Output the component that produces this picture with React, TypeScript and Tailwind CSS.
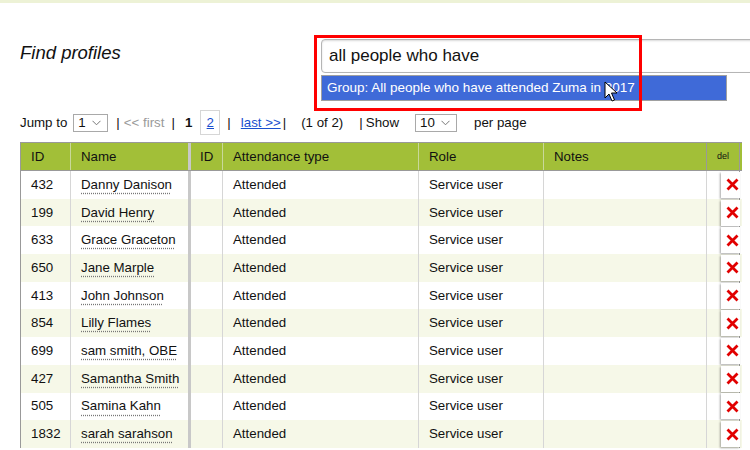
import React from "react";

const rows = [
  { id: "432", name: "Danny Danison" },
  { id: "199", name: "David Henry" },
  { id: "633", name: "Grace Graceton" },
  { id: "650", name: "Jane Marple" },
  { id: "413", name: "John Johnson" },
  { id: "854", name: "Lilly Flames" },
  { id: "699", name: "sam smith, OBE" },
  { id: "427", name: "Samantha Smith" },
  { id: "505", name: "Samina Kahn" },
  { id: "1832", name: "sarah sarahson" },
];

const cols = "grid grid-cols-[50px_120px_32px_196px_125px_163px_33px]";

const Chevron = () => (
  <svg width="9" height="6" viewBox="0 0 9 6" className="ml-auto mr-[6px]">
    <path d="M0.5 0.8 L4.5 4.8 L8.5 0.8" fill="none" stroke="#777" strokeWidth="1" />
  </svg>
);

const Select = ({ value, className }: { value: string; className: string }) => (
  <div
    className={`flex h-[18px] items-center border border-[#a9a9a9] bg-white pl-[4px] text-[13.3px] ${className}`}
  >
    <span>{value}</span>
    <Chevron />
  </div>
);

const DelButton = () => (
  <div className="relative z-10 -mr-[1px] ml-auto flex h-[26px] w-[19px] items-center justify-end bg-white pr-[1px] shadow-[-1px_1px_2px_rgba(0,0,0,0.35)]">
    <svg width="13" height="13" viewBox="0 0 13 13">
      <path d="M1.5 1.5 L11.5 11.5 M11.5 1.5 L1.5 11.5" stroke="#e10000" strokeWidth="2.8" />
    </svg>
  </div>
);

export default function App() {
  return (
    <div className="relative h-[450px] w-[750px] overflow-hidden bg-white font-['Liberation_Sans',Arial,sans-serif] text-[#111]">
      <div className="h-[3px] bg-[#edf2d6]" />

      {/* header */}
      <div className="mt-[36px] flex">
        <div className="w-[321px] shrink-0 pl-[20px] text-[18.5px] italic">Find profiles</div>
        <div className="relative">
          <div className="flex h-[34px] w-[440px] items-center rounded-[4px] border border-[#b5b5b5] pl-[7px] text-[17px] shadow-[inset_0_1px_2px_rgba(0,0,0,0.15)]">
            all people who have
          </div>
          <div className="absolute left-0 top-[36px] flex h-[26px] w-[406px] items-center border border-[#a0a0a0] bg-[#3f6ad8] pl-[5px] text-[13.5px] text-white">
            Group: All people who have attended Zuma in 2017
          </div>
          {/* mouse cursor */}
          <svg
            width="14"
            height="22"
            viewBox="0 0 14 22"
            className="absolute left-[283px] top-[42px]"
          >
            <path
              d="M1 1 L1 17 L5 13 L8 20 L10.5 19 L7.5 12 L13 12 Z"
              fill="#fff"
              stroke="#000"
              strokeWidth="1"
              strokeLinejoin="round"
            />
          </svg>
        </div>
      </div>

      {/* annotation box */}
      <div className="absolute left-[314px] top-[35px] h-[76px] w-[328px] border-[3px] border-[#ff0000]" />

      {/* pagination */}
      <div className="mt-[37px] flex h-[25px] items-center pl-[20px] text-[13.3px]">
        <span>Jump to</span>
        <Select value="1" className="ml-[6px] w-[35px]" />
        <span className="ml-[8px]">|</span>
        <span className="ml-[4px] text-[#9a9a9a]">&lt;&lt; first</span>
        <span className="ml-[7px]">|</span>
        <span className="ml-[10px] font-bold">1</span>
        <span className="ml-[8px] flex h-[25px] w-[20px] items-center justify-center border border-[#d6d6d6]">
          <span className="text-[#1a4fcf] underline">2</span>
        </span>
        <span className="ml-[7px]">|</span>
        <span className="ml-[10px] text-[#1a4fcf] underline">last &gt;&gt;</span>
        <span className="ml-[2px]">|</span>
        <span className="ml-[15px]">(1 of 2)</span>
        <span className="ml-[16px]">|</span>
        <span className="ml-[3px]">Show</span>
        <Select value="10" className="ml-[16px] w-[42px]" />
        <span className="ml-[17px]">per page</span>
      </div>

      {/* table */}
      <div className="ml-[20px] mt-[7px] w-[722px] border-l border-[#999] text-[13.3px]">
        <div className={`${cols} h-[29px] border-y border-[#999] bg-[#a2bf38]`}>
          <div className="flex items-center border-r border-[#c9d89a] pl-[10px]">ID</div>
          <div className="flex items-center border-r-[3px] border-[#c8c8c8] pl-[10px]">Name</div>
          <div className="flex items-center border-r border-[#c9d89a] pl-[9px]">ID</div>
          <div className="flex items-center border-r border-[#c9d89a] pl-[10px]">Attendance type</div>
          <div className="flex items-center border-r border-[#c9d89a] pl-[10px]">Role</div>
          <div className="flex items-center border-r border-[#999] pl-[10px]">Notes</div>
          <div className="flex items-center justify-center border-r border-[#999] text-[9px]">del</div>
        </div>
        {rows.map((r, i) => (
          <div
            key={r.id}
            className={`${cols} h-[27.7px] ${i % 2 === 1 ? "bg-[#f6f8e8]" : "bg-white"}`}
          >
            <div className="flex items-center border-r border-[#d6d6d6] pl-[10px]">{r.id}</div>
            <div className="flex items-center border-r-[3px] border-[#c8c8c8] pl-[10px]">
              <span className="underline decoration-[#777] decoration-dotted underline-offset-[4px]">
                {r.name}
              </span>
            </div>
            <div className="border-r border-[#d6d6d6]" />
            <div className="flex items-center border-r border-[#d6d6d6] pl-[10px]">Attended</div>
            <div className="flex items-center border-r border-[#d6d6d6] pl-[10px]">Service user</div>
            <div className="border-r border-[#d6d6d6]" />
            <div className="flex items-center border-r border-[#999]">
              <DelButton />
            </div>
          </div>
        ))}
      </div>
    </div>
  );
}
